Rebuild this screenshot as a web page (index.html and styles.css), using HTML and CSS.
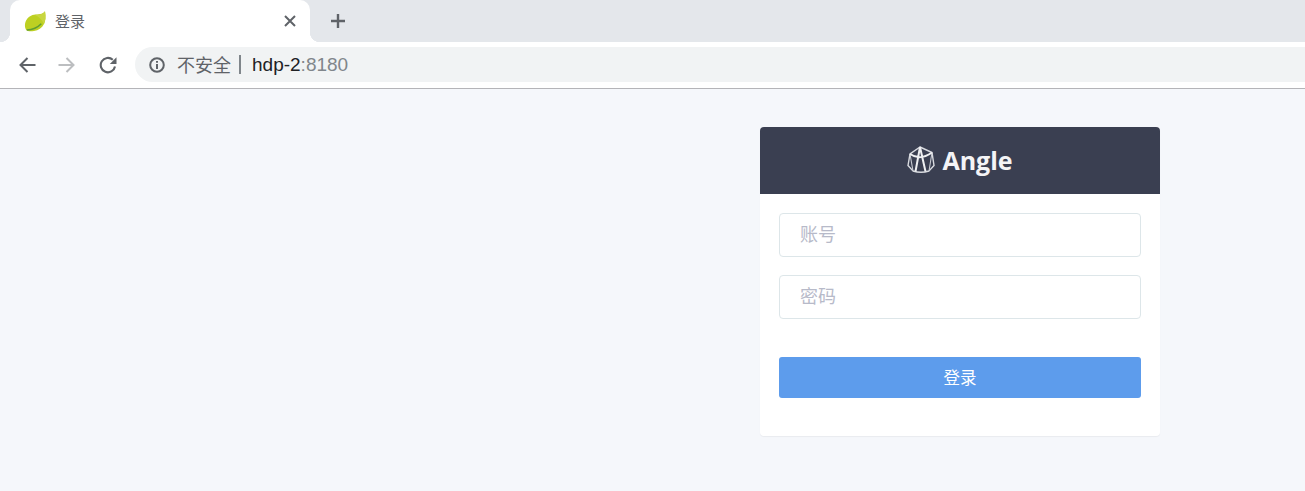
FILE: index.html
```html
<!DOCTYPE html>
<html lang="zh">
<head>
<meta charset="utf-8">
<title>登录</title>
<link rel="stylesheet" href="styles.css">
</head>
<body>
<div class="tabstrip">
	<div class="tab">
		<svg class="favicon" width="24" height="24" viewBox="0 0 24 24">
			<path d="M1 15 C2 9.5 6 6.5 10 5.8 C14 5 19 5.5 21 2.2 C22 8 21.5 12 20 15 C18 19 14.5 21.3 10 22 C6.5 22.5 3.5 22.4 2 20.7 C1 19 0.8 17 1 15 Z" fill="#bdd022"/>
			<path d="M11 6 C15 5.4 19 5.5 21 2.2 C22 8 21.5 12 20 15 C18.5 11.5 15.5 8 11 6 Z" fill="#c8d640"/>
			<path d="M2.8 21 C8 20.8 13 19.2 17.3 14.8" fill="none" stroke="#5f9e33" stroke-width="1.6"/>
		</svg>
		<span class="tab-title">登录</span>
		<svg class="tab-close" width="12" height="12" viewBox="0 0 12 12">
			<path d="M1 1 L11 11 M11 1 L1 11" stroke="#5f6368" stroke-width="2"/>
		</svg>
	</div>
	<svg class="new-tab" width="16" height="16" viewBox="0 0 16 16">
		<path d="M8 1 V15 M1 8 H15" stroke="#5f6368" stroke-width="2.4"/>
	</svg>
</div>
<div class="toolbar">
	<svg class="nav-icon" width="18" height="18" viewBox="0 0 18 18">
		<path d="M17.5 9 H3 M9.5 2 L2.5 9 L9.5 16" fill="none" stroke="#5f6368" stroke-width="2"/>
	</svg>
	<svg class="nav-icon" width="18" height="18" viewBox="0 0 18 18">
		<path d="M0.5 9 H15 M8.5 2 L15.5 9 L8.5 16" fill="none" stroke="#bcbec0" stroke-width="2"/>
	</svg>
	<svg class="nav-icon reload" width="18" height="18" viewBox="0 0 18 18">
		<path d="M16 10.5 A7.2 7.2 0 1 1 13.8 3.8" fill="none" stroke="#5f6368" stroke-width="2.1"/>
		<path d="M10.8 8 H17.5 V1.2 Z" fill="#5f6368"/>
	</svg>
	<div class="omnibox">
		<svg class="info-icon" width="16" height="16" viewBox="0 0 16 16">
			<circle cx="8" cy="8" r="6.8" fill="none" stroke="#5f6368" stroke-width="2"/>
			<path d="M8 7 V12 M8 4 V5.8" stroke="#5f6368" stroke-width="2"/>
		</svg>
		<span class="not-secure">不安全</span>
		<span class="divider"></span>
		<span class="host">hdp-2</span><span class="port">:8180</span>
	</div>
</div>
<div class="page">
	<div class="panel">
		<div class="panel-heading">
			<svg class="logo" width="28" height="28" viewBox="0 0 28 28">
				<path d="M13 1 L25 6.5 L27 19.5 L22 25 Q14 27.5 6 25 L1 19.5 L3 8 Z" fill="none" stroke="#d9dbe0" stroke-width="1.4"/>
				<path d="M3 8 L6 25 M25 6.5 L22 25" fill="none" stroke="#c9ccd3" stroke-width="1.1"/>
				<path d="M13 1 L8.5 25.5 M13 1 L18.5 25.5 M3 8 Q13 15 25 6.5" fill="none" stroke="#eeeff1" stroke-width="2"/>
			</svg>
			<span class="brand">Angle</span>
		</div>
		<form class="panel-body">
			<input class="field" type="text" placeholder="账号">
			<input class="field" type="password" placeholder="密码">
			<button class="btn-login" type="button">登录</button>
		</form>
	</div>
</div>
</body>
</html>
```

FILE: styles.css
```css
html,body{margin:0;padding:0;}
body{width:1305px;height:491px;overflow:hidden;background:#f5f7fb;font-family:"Liberation Sans","Noto Sans CJK SC",sans-serif;}

.tabstrip{height:42px;background:#e4e7eb;display:flex;align-items:flex-start;padding-left:10px;box-sizing:border-box;}
.tab{position:relative;width:300px;height:42px;background:#fff;border-radius:10px 10px 0 0;display:flex;align-items:center;box-sizing:border-box;padding-left:14px;}
.tab::before,.tab::after{content:"";position:absolute;bottom:0;width:10px;height:10px;}
.tab::before{left:-10px;background:radial-gradient(circle at 0 0,transparent 10px,#fff 10.5px);}
.tab::after{right:-10px;background:radial-gradient(circle at 100% 0,transparent 10px,#fff 10.5px);}
.favicon{flex:none;}
.tab-title{font-size:15px;color:#5f6368;margin:0 0 2px 7px;flex:1;}
.tab-close{margin-right:14px;}
.new-tab{margin:13px 0 0 20px;}

.toolbar{height:46px;background:#fff;border-bottom:1px solid #b4b4b8;display:flex;align-items:center;padding:0 0 0 18px;box-sizing:content-box;}
.nav-icon{margin-right:22px;flex:none;}
.reload{margin-left:1px;}
.omnibox{flex:1;height:35px;margin-left:-4px;margin-top:-1px;background:#f1f3f4;border-radius:18px 0 0 18px;display:flex;align-items:center;padding-left:14px;font-size:19px;}
.info-icon{margin-right:12px;}
.not-secure{color:#5f6368;font-size:18px;margin-top:-2px;}
.divider{width:2px;height:19px;background:#80868b;margin:0 11px 0 8px;}
.host{color:#202124;}
.port{color:#80868b;}

.page{display:flex;justify-content:flex-end;padding:38px 145px 0 0;}
.panel{width:400px;background:#fff;border-radius:4px;box-shadow:0 1px 1px rgba(0,0,0,.05);}
.panel-heading{height:67px;background:#3a3f51;border-radius:4px 4px 0 0;display:flex;align-items:center;justify-content:center;gap:7px;}
.logo{margin-top:-1px;}
.brand{font-family:"Open Sans",sans-serif;font-weight:700;font-size:25px;color:#f4f4f6;padding-bottom:2px;}
.panel-body{padding:19px 19px 38px;display:flex;flex-direction:column;}
.field{height:44px;box-sizing:border-box;border:1px solid #dde6e9;border-radius:4px;padding:0 20px;margin-bottom:18px;font-size:18px;font-family:inherit;background:#fff;outline:none;}
.field::placeholder{color:#b7bac9;opacity:1;}
.btn-login{height:41px;margin-top:20px;padding:0 0 2px;border:0;border-radius:3px;background:#5d9cec;color:#fff;font-size:16.5px;font-family:inherit;}
```
